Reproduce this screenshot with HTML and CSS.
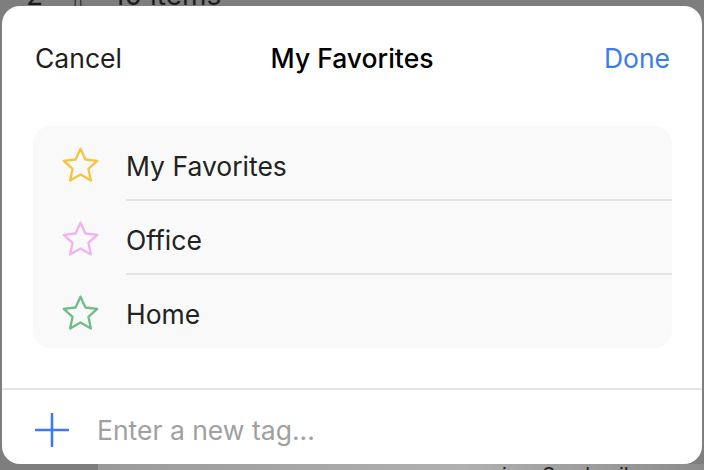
FILE: index.html
```html
<!DOCTYPE html>
<html>
<head>
<meta charset="utf-8">
<link rel="stylesheet" href="styles.css">
</head>
<body>
<div class="backdrop">
  <div class="bd-top"><span class="bd-num">2</span><span class="bd-icon">▯</span><span class="bd-items">10 items</span></div>
  <div class="bd-bottom"><span class="bd-text">ing. Sarah wil</span></div>
</div>
<div class="sheet">
  <header class="nav">
    <span class="nav-btn cancel">Cancel</span>
    <span class="nav-title">My Favorites</span>
    <span class="nav-btn done">Done</span>
  </header>
  <div class="content">
    <ul class="list">
      <li class="row">
        <svg class="star" viewBox="0 0 24 24" width="43" height="43"><path d="M12 2.6l2.75 6.05 6.6.72-4.93 4.45 1.38 6.5L12 17.03l-5.8 3.29 1.38-6.5L2.65 9.37l6.6-.72z" fill="none" stroke="#f6c443" stroke-width="1.3" stroke-linejoin="round"/></svg>
        <span class="label">My Favorites</span>
      </li>
      <li class="row">
        <svg class="star" viewBox="0 0 24 24" width="43" height="43"><path d="M12 2.6l2.75 6.05 6.6.72-4.93 4.45 1.38 6.5L12 17.03l-5.8 3.29 1.38-6.5L2.65 9.37l6.6-.72z" fill="none" stroke="#f3b2ed" stroke-width="1.3" stroke-linejoin="round"/></svg>
        <span class="label">Office</span>
      </li>
      <li class="row">
        <svg class="star" viewBox="0 0 24 24" width="43" height="43"><path d="M12 2.6l2.75 6.05 6.6.72-4.93 4.45 1.38 6.5L12 17.03l-5.8 3.29 1.38-6.5L2.65 9.37l6.6-.72z" fill="none" stroke="#6fbd88" stroke-width="1.3" stroke-linejoin="round"/></svg>
        <span class="label">Home</span>
      </li>
    </ul>
  </div>
  <footer class="add">
    <svg class="plus" viewBox="0 0 34 34" width="34" height="34"><path d="M17 1v32M1 17h32" stroke="#3a7bf2" stroke-width="2.6" stroke-linecap="round"/></svg>
    <span class="placeholder">Enter a new tag...</span>
  </footer>
</div>
</body>
</html>
```
FILE: styles.css
```css
html, body {
  margin: 0;
  padding: 0;
}
body {
  width: 704px;
  height: 470px;
  overflow: hidden;
  background: #7e7e7e;
  font-family: Inter, "Noto Sans", "Liberation Sans", sans-serif;
  position: relative;
  padding: 6px 2px;
  box-sizing: border-box;
}
.backdrop {
  position: absolute;
  inset: 0;
  z-index: 0;
}
.bd-top {
  position: absolute;
  top: -22px;
  left: 26px;
  font-size: 28px;
  color: #1c1c1c;
  display: flex;
  gap: 30px;
  align-items: baseline;
}
.bd-icon { font-size: 18px; }
.bd-bottom {
  position: absolute;
  left: 98px;
  right: 0;
  bottom: 0;
  height: 6px;
  background: linear-gradient(90deg, #9a9a9a, #b0b0b0 60%, #8c8c8c);
}
.bd-text {
  position: absolute;
  left: 404px;
  top: -4px;
  font-size: 20px;
  color: #222;
  line-height: 30px;
}
.sheet {
  position: relative;
  z-index: 1;
  height: 458px;
  width: 700px;
  background: #fff;
  border-radius: 18px;
  display: flex;
  flex-direction: column;
  overflow: hidden;
}
.nav {
  height: 104px;
  flex: none;
  display: flex;
  align-items: center;
  justify-content: space-between;
  padding: 0 32px 0 33px;
  position: relative;
  box-sizing: border-box;
}
.nav-btn {
  font-size: 26.5px;
  color: #1e1e1e;
  position: relative;
  z-index: 1;
}
.done { color: #3a7bf2; }
.nav-title {
  position: absolute;
  left: 0;
  right: 0;
  top: 0;
  bottom: 0;
  display: flex;
  align-items: center;
  justify-content: center;
  font-size: 26.5px;
  font-weight: 500;
  color: #000;
}
.content {
  flex: none;
  padding: 16px 30px 0 31px;
  height: 280px;
  box-sizing: border-box;
  border-bottom: 2px solid #e5e5e5;
}
.list {
  list-style: none;
  margin: 0;
  padding: 0;
  background: #f9f9f9;
  border-radius: 18px;
  overflow: hidden;
}
.row {
  height: 74px;
  box-sizing: border-box;
  padding-top: 5px;
  display: flex;
  align-items: center;
  position: relative;
}
.row + .row::before {
  content: "";
  position: absolute;
  top: -1px;
  left: 93px;
  right: 0;
  height: 2px;
  background: #e3e3e3;
}
.star {
  margin-left: 26px;
  margin-right: 24px;
  flex: none;
}
.label {
  font-size: 26.5px;
  color: #222;
}
.add {
  flex: 1;
  display: flex;
  align-items: center;
  padding-left: 33px;
  padding-top: 6px;
}
.plus { flex: none; margin-right: 28px; }
.placeholder {
  font-size: 26.5px;
  color: #a0a0a0;
}
```
